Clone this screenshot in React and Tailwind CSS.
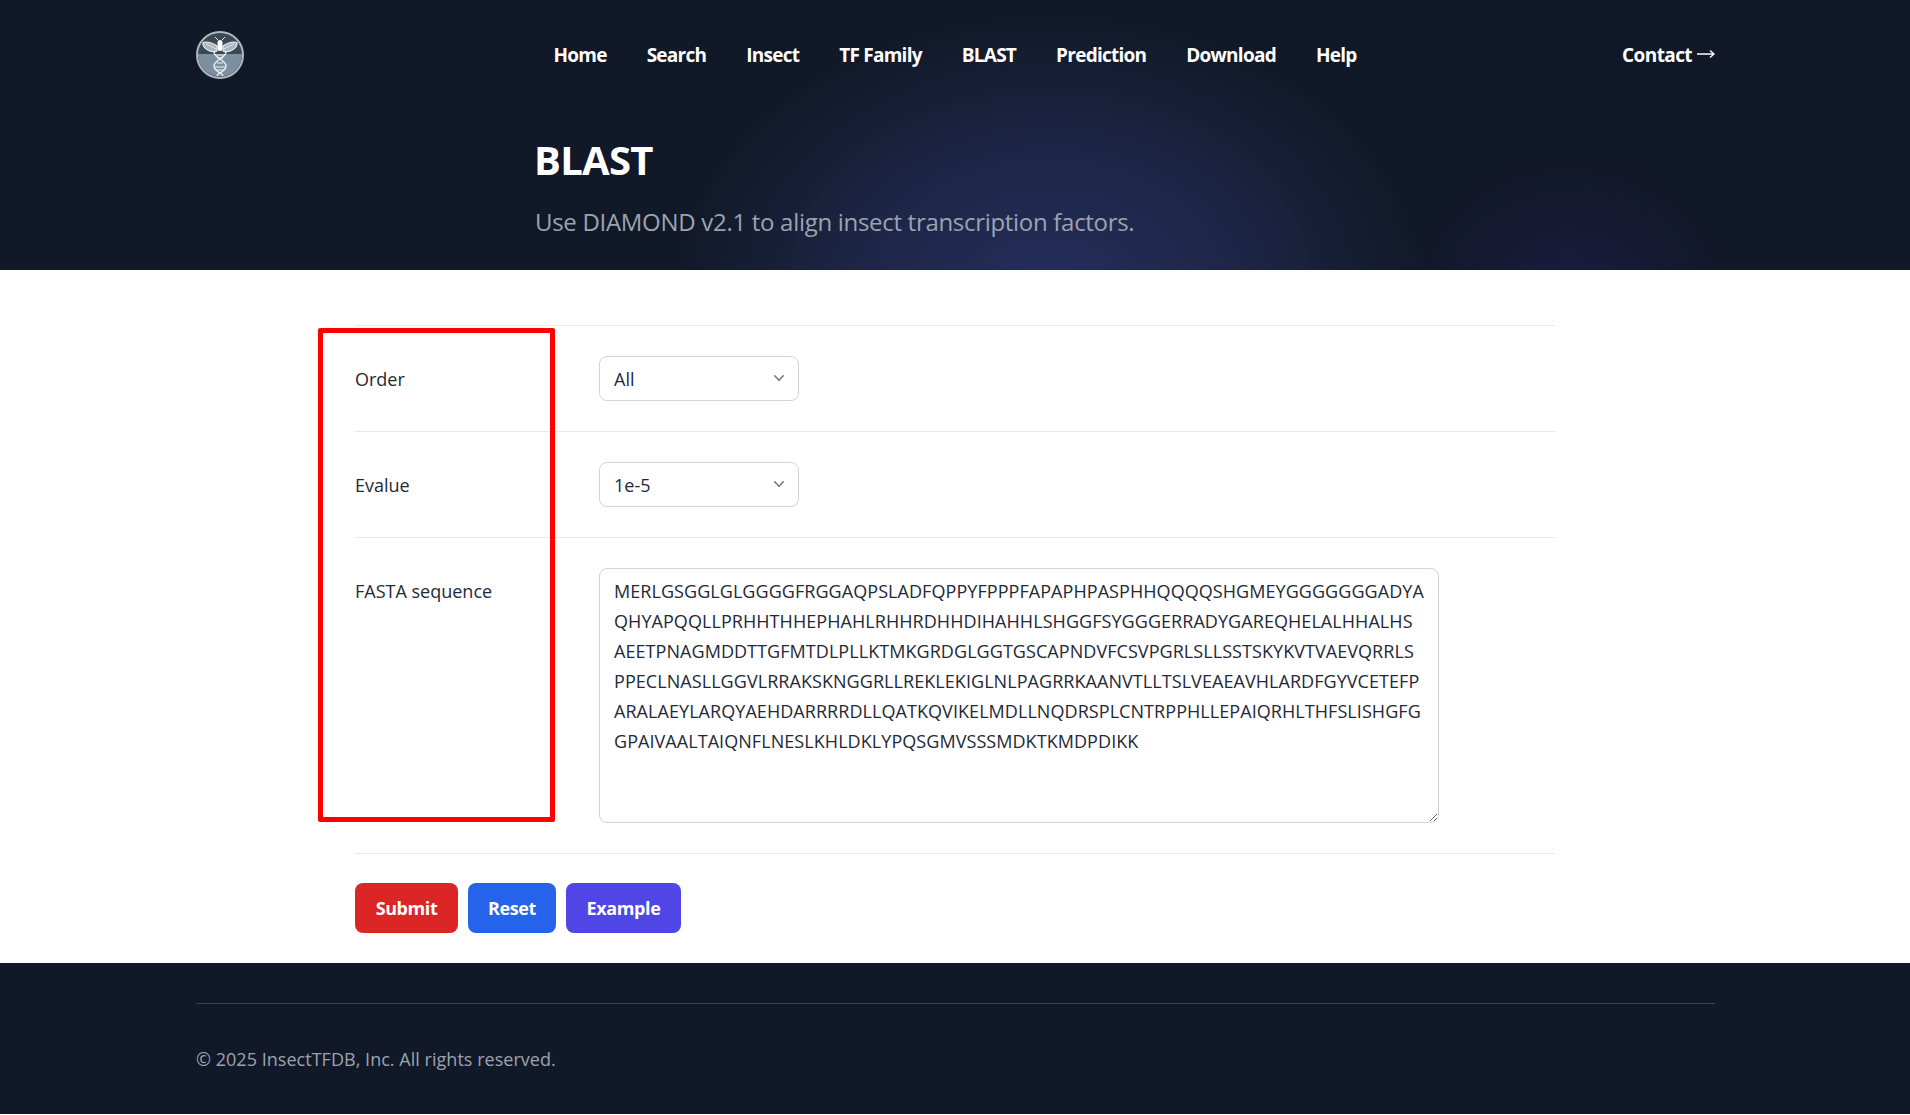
const SEQ = `MERLGSGGLGLGGGGFRGGAQPSLADFQPPYFPPPFAPAPHPASPHHQQQQSHGMEYGGGGGGGADYA
QHYAPQQLLPRHHTHHEPHAHLRHHRDHHDIHAHHLSHGGFSYGGGERRADYGAREQHELALHHALHS
AEETPNAGMDDTTGFMTDLPLLKTMKGRDGLGGTGSCAPNDVFCSVPGRLSLLSSTSKYKVTVAEVQRRLS
PPECLNASLLGGVLRRAKSKNGGRLLREKLEKIGLNLPAGRRKAANVTLLTSLVEAEAVHLARDFGYVCETEFP
ARALAEYLARQYAEHDARRRRDLLQATKQVIKELMDLLNQDRSPLCNTRPPHLLEPAIQRHLTHFSLISHGFG
GPAIVAALTAIQNFLNESLKHLDKLYPQSGMVSSSMDKTKMDPDIKK`;

const NAV = ["Home", "Search", "Insect", "TF Family", "BLAST", "Prediction", "Download", "Help"];

function Logo() {
    return (
        <svg viewBox="0 0 48 48" className="w-12 h-12">
            <circle cx="24" cy="24" r="23" fill="#3b4854" stroke="#aeb8c0" strokeWidth="2" />
            <path d="M2 23h44a22 22 0 0 1-44 1z" fill="#7b8fa0" />
            {/* wings */}
            <path d="M21 15C16 11 9 10 7 12c-1 4 7 11 14 8z" fill="#aab6bf" stroke="#eef2f4" strokeWidth="1.1" />
            <path d="M27 15c5-4 12-5 14-3 1 4-7 11-14 8z" fill="#aab6bf" stroke="#eef2f4" strokeWidth="1.1" />
            <path d="M10 13l10 5M38 13l-10 5" stroke="#eef2f4" strokeWidth="0.7" />
            {/* body and antennae */}
            <rect x="21.5" y="9" width="5" height="11" rx="2.5" fill="#fff" />
            <path d="M22 9l-3-3M26 9l3-3" stroke="#e5e9ec" strokeWidth="1" fill="none" />
            {/* dna */}
            <path d="M18 21c0 6 12 8 12 14s-8 6-9 10" stroke="#eef2f4" strokeWidth="1.4" fill="none" />
            <path d="M30 21c0 6-12 8-12 14s8 6 9 10" stroke="#eef2f4" strokeWidth="1.4" fill="none" />
            <path d="M19 24h10M21 27h6M21 32h6M19 36h10M20 39h8M22 42h4" stroke="#eef2f4" strokeWidth="1" />
        </svg>
    );
}

function Chevron() {
    return (
        <svg viewBox="0 0 20 20" className="w-5 h-5 absolute right-[10px] top-[12px] pointer-events-none" fill="#6b7280">
            <path fillRule="evenodd" clipRule="evenodd" d="M5.23 7.21a.75.75 0 0 1 1.06.02L10 11.17l3.71-3.94a.75.75 0 1 1 1.08 1.04l-4.25 4.5a.75.75 0 0 1-1.08 0l-4.25-4.5a.75.75 0 0 1 .02-1.06z" />
        </svg>
    );
}

function SelectBox({ value }) {
    return (
        <div className="relative w-[200px] h-[45px]">
            <select
                defaultValue={value}
                className="appearance-none w-full h-full bg-white border border-[#d1d5db] rounded-lg pl-[14px] pr-9 pt-[1px] text-[#1f2937] text-[18px] outline-none"
            >
                <option>{value}</option>
            </select>
            <Chevron />
        </div>
    );
}

function Row({ label, children }) {
    return (
        <div className="grid grid-cols-[244px_1fr] border-b border-[#e5e7eb] py-[30px]">
            <label className="text-[18px] leading-[24px] text-[#1f2937] mt-[11px]">{label}</label>
            <div>{children}</div>
        </div>
    );
}

export default function App() {
    return (
        <div className="relative bg-white flex flex-col font-['Open_Sans','Noto_Sans',sans-serif]">
            {/* header */}
            <header className="h-[270px] bg-[#111827] bg-[radial-gradient(ellipse_380px_280px_at_1050px_290px,#232e5a_0%,#1e2749_45%,transparent_100%),radial-gradient(ellipse_170px_150px_at_1570px_300px,#1a1c40_0%,transparent_100%)]">
                <nav className="px-[196px] h-[110px] grid grid-cols-[1fr_auto_1fr] items-center">
                    <Logo />
                    <div className="flex items-center gap-10 text-[19px] font-bold text-white tracking-[-0.75px]">
                        {NAV.map((n) => (
                            <a key={n} href="#">{n}</a>
                        ))}
                    </div>
                    <a href="#" className="justify-self-end -mr-[1px] flex items-center gap-[5px] text-[19px] font-bold text-white tracking-[-0.6px]">
                        Contact
                        <svg viewBox="0 0 18 10" className="w-[18px] h-[10px] mb-[2px]" fill="none" stroke="#fff" strokeWidth="1.4">
                            <path d="M0 5h17M13 1.5L17 5l-4 3.5" />
                        </svg>
                    </a>
                </nav>
                <div className="ml-[535px] mt-[25px]">
                    <h1 className="text-[40px] leading-[50px] font-bold text-white tracking-[-0.7px] -ml-[1px]">BLAST</h1>
                    <p className="text-[24px] leading-[32px] text-[#9ca3af] mt-[21px] tracking-[-0.3px]">
                        Use DIAMOND v2.1 to align insect transcription factors.
                    </p>
                </div>
            </header>

            {/* form */}
            <main className="pt-[55px] pb-[30px] px-[355px]">
                <div className="border-t border-[#e5e7eb]">
                    <Row label="Order">
                        <SelectBox value="All" />
                    </Row>
                    <Row label="Evalue">
                        <SelectBox value="1e-5" />
                    </Row>
                    <Row label="FASTA sequence">
                        <textarea
                            defaultValue={SEQ}
                            className="block w-[840px] h-[255px] border border-[#d1d5db] rounded-lg pl-[14px] pr-[2px] py-[7px] text-[18px] leading-[30px] tracking-[0.06px] text-[#1f2937] outline-none"
                        />
                    </Row>
                </div>
                <div className="flex gap-[10px] mt-[29px]">
                    <button className="h-[50px] w-[103px] rounded-lg bg-[#dc2626] text-white font-bold text-[18px] tracking-[-0.4px]">Submit</button>
                    <button className="h-[50px] w-[88px] rounded-lg bg-[#2563eb] text-white font-bold text-[18px] tracking-[-0.4px]">Reset</button>
                    <button className="h-[50px] w-[115px] rounded-lg bg-[#4f46e5] text-white font-bold text-[18px] tracking-[-0.4px]">Example</button>
                </div>
            </main>

            {/* footer */}
            <footer className="h-[151px] bg-[#111827] pl-[196px] pr-[195px] pt-[40px]">
                <div className="border-t border-[#374151] pt-[41px] text-[18px] leading-[28px] text-[#9ca3af] tracking-[0.03px]">
                    © 2025 InsectTFDB, Inc. All rights reserved.
                </div>
            </footer>

            {/* red highlight over the labels */}
            <div className="absolute left-[318px] top-[328px] w-[237px] h-[494px] border-[5px] border-[#ff0000] rounded-[2px] pointer-events-none" />
        </div>
    );
}
